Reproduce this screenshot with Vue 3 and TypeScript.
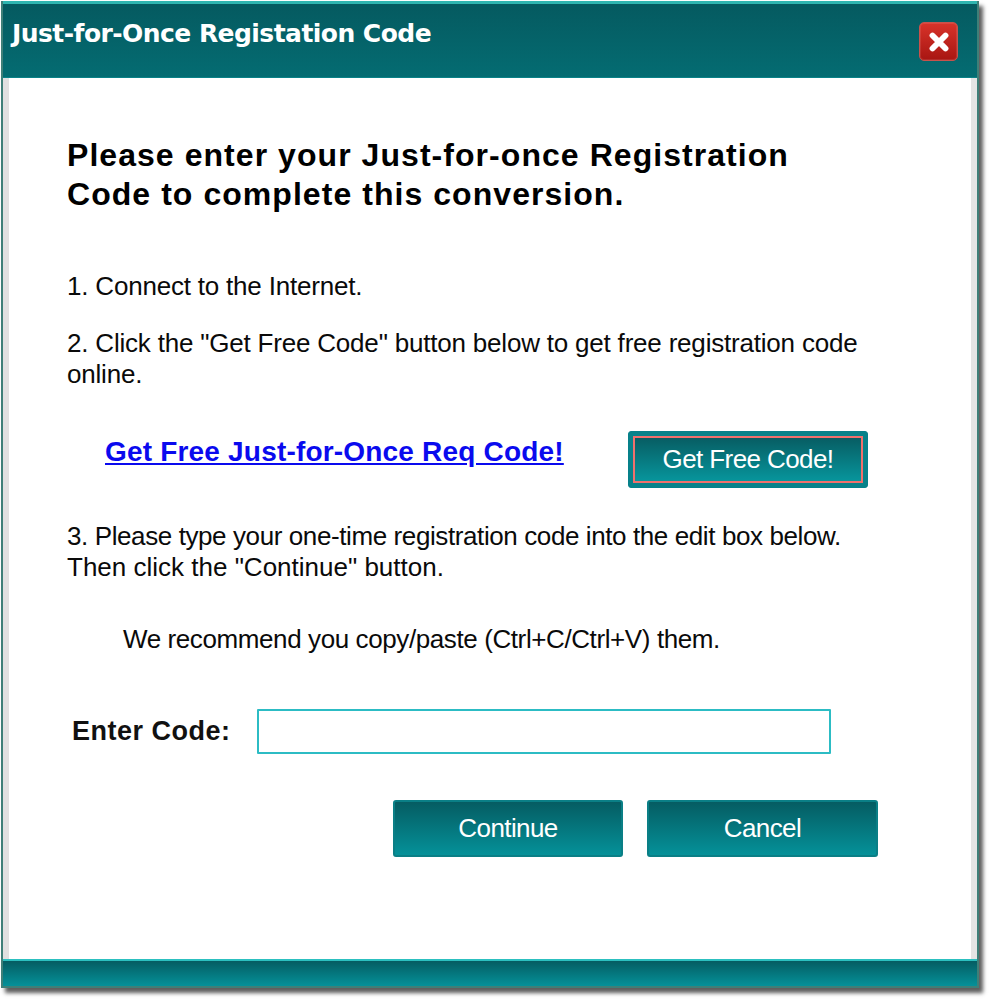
<script setup lang="ts">
const title: string = 'Just-for-Once Registation Code'
</script>

<template>
  <div class="page">
    <div class="window">
      <header class="titlebar">
        <span class="title">{{ title }}</span>
        <button class="close" aria-label="Close">
          <svg viewBox="0 0 24 24" width="26" height="26">
            <path d="M6 6 L18 18 M18 6 L6 18" stroke="#fff" stroke-width="5.4" stroke-linecap="round" />
          </svg>
        </button>
      </header>
      <main class="content">
        <h1 class="heading">Please enter your Just-for-once Registration<br />Code to complete this conversion.</h1>
        <p class="step first">1. Connect to the Internet.</p>
        <p class="step second">2. Click the "Get Free Code" button below to get free registration code<br />online.</p>
        <div class="code-row">
          <a class="link" href="#">Get Free Just-for-Once Req Code!</a>
          <button class="btn focused"><span>Get Free Code!</span></button>
        </div>
        <p class="step third"><span class="tight">3. Please type your one-time registration code into the edit box below.</span><br />Then click the "Continue" button.</p>
        <p class="step note tight">We recommend you copy/paste (Ctrl+C/Ctrl+V) them.</p>
        <div class="enter-row">
          <label class="enter-label" for="code">Enter Code:</label>
          <input id="code" class="enter-input" type="text" />
        </div>
        <div class="actions">
          <button class="btn action"><span>Continue</span></button>
          <button class="btn action"><span>Cancel</span></button>
        </div>
      </main>
      <footer class="footer"></footer>
    </div>
  </div>
</template>

<style>
html, body { margin: 0; background: #fff; }
</style>

<style scoped>
.page {
  width: 990px;
  height: 1000px;
  box-sizing: border-box;
  padding: 1px 0 0 1px;
  background: #fff;
  overflow: hidden;
}
.window {
  width: 978px;
  height: 987px;
  box-sizing: border-box;
  display: flex;
  flex-direction: column;
  background: #fff;
  border: solid #3f7f78;
  border-width: 0 2px 2px 2px;
  box-shadow: 4px 5px 4px rgba(40, 40, 40, 0.75);
}
.titlebar {
  height: 77px;
  flex: none;
  box-sizing: border-box;
  border-top: 3px solid #2fb5b0;
  background: linear-gradient(#055a60, #046c72);
  border-bottom: 1px solid #0a8288;
  display: flex;
  justify-content: space-between;
  align-items: flex-start;
  padding: 12px 19px 0 9px;
}
.title {
  font-family: "DejaVu Sans", sans-serif;
  font-weight: 700;
  font-size: 25px;
  line-height: 36px;
  letter-spacing: -0.55px;
  color: #fff;
}
.close {
  width: 39px;
  height: 39px;
  margin-top: 6px;
  padding: 0;
  display: flex;
  align-items: center;
  justify-content: center;
  border: 1px solid #c8524c;
  border-radius: 5px;
  background: linear-gradient(#d8332a, #a81612);
  box-shadow: inset 0 0 0 1px rgba(255, 255, 255, 0.1);
}
.content {
  flex: 1;
  box-sizing: border-box;
  border-left: 6px solid #e0e0e0;
  border-right: 6px solid #e4e4e4;
  padding: 0 0 0 58px;
  color: #0a0a0a;
  font-family: "Liberation Sans", Arial, sans-serif;
  font-size: 26px;
}
.heading {
  margin: 58px 0 0;
  font-size: 32px;
  line-height: 39px;
  font-weight: 700;
  letter-spacing: 1.05px;
  color: #000;
}
.step {
  margin: 0;
  line-height: 31px;
  letter-spacing: -0.2px;
}
.third { letter-spacing: 0; }
.tight { letter-spacing: -0.4px; }
.first { margin-top: 57px; }
.second { margin-top: 26px; }
.code-row {
  margin-top: 41px;
  display: flex;
  align-items: flex-start;
}
.link {
  margin: 0 0 0 38px;
  width: 523px;
  padding-top: 4px;
  font-size: 28px;
  line-height: 33px;
  font-weight: 700;
  letter-spacing: 0.19px;
  color: #0a0aee;
  text-decoration: underline;
}
.btn {
  box-sizing: border-box;
  padding: 0;
  font-family: "Liberation Sans", Arial, sans-serif;
  font-size: 26px;
  letter-spacing: -0.6px;
  color: #fff;
  border: 2px solid #0a7f86;
  border-radius: 3px;
  background: linear-gradient(#055c62, #059199);
}
.focused {
  width: 240px;
  height: 57px;
  border: 1px solid #07808a;
  background: #07828a;
  padding: 4px;
}
.focused span {
  display: flex;
  align-items: center;
  justify-content: center;
  height: 100%;
  border: 2px solid #f0706c;
  box-sizing: border-box;
  background: linear-gradient(#075d63, #07959c);
}
.third { margin-top: 33px; }
.note {
  margin-top: 41px;
  margin-left: 56px;
}
.enter-row {
  margin-top: 54px;
  display: flex;
  align-items: center;
  padding-left: 5px;
}
.enter-label {
  width: 185px;
  font-size: 27px;
  font-weight: 700;
  letter-spacing: 0.5px;
  color: #111;
}
.enter-input {
  width: 574px;
  height: 45px;
  box-sizing: border-box;
  border: 2px solid #2cbcc4;
  border-radius: 1px;
  background: #fff;
  outline: none;
}
.actions {
  margin-top: 46px;
  margin-left: 326px;
  display: flex;
  gap: 24px;
}
.action {
  width: 230px;
  height: 57px;
}
.action + .action { width: 231px; }
.footer {
  height: 25px;
  flex: none;
  border-top: 2px solid #2cc0c0;
  background: linear-gradient(#055c62, #059199);
}
</style>
